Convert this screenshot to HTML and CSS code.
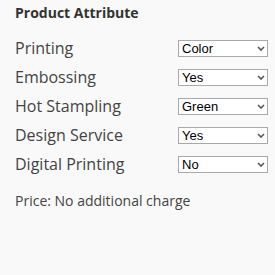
FILE: index.html
```html
<!DOCTYPE html>
<html lang="en">

<head>
	<meta charset="UTF-8">
	<meta name="viewport" content="width=device-width, initial-scale=1.0">
	<title>Product Attribute</title>
	<link rel="stylesheet" href="styles.css">
</head>

<body>
	<div class="attr-box">
		<h3 class="attr-title">Product Attribute</h3>

		<div class="attr-row">
			<label class="attr-label">Printing</label>
			<span class="attr-select">
				<select>
					<option>Color</option>
					<option>Black</option>
				</select>
				<svg class="attr-arrow" width="8" height="5" viewBox="0 0 8 5"><path d="M1 1 L4 4 L7 1" fill="none" stroke="#555" stroke-width="1.6" /></svg>
			</span>
		</div>

		<div class="attr-row">
			<label class="attr-label">Embossing</label>
			<span class="attr-select">
				<select>
					<option>Yes</option>
					<option>No</option>
				</select>
				<svg class="attr-arrow" width="8" height="5" viewBox="0 0 8 5"><path d="M1 1 L4 4 L7 1" fill="none" stroke="#555" stroke-width="1.6" /></svg>
			</span>
		</div>

		<div class="attr-row">
			<label class="attr-label">Hot Stampling</label>
			<span class="attr-select">
				<select>
					<option>Green</option>
					<option>Gold</option>
				</select>
				<svg class="attr-arrow" width="8" height="5" viewBox="0 0 8 5"><path d="M1 1 L4 4 L7 1" fill="none" stroke="#555" stroke-width="1.6" /></svg>
			</span>
		</div>

		<div class="attr-row">
			<label class="attr-label">Design Service</label>
			<span class="attr-select">
				<select>
					<option>Yes</option>
					<option>No</option>
				</select>
				<svg class="attr-arrow" width="8" height="5" viewBox="0 0 8 5"><path d="M1 1 L4 4 L7 1" fill="none" stroke="#555" stroke-width="1.6" /></svg>
			</span>
		</div>

		<div class="attr-row">
			<label class="attr-label">Digital Printing</label>
			<span class="attr-select">
				<select>
					<option>No</option>
					<option>Yes</option>
				</select>
				<svg class="attr-arrow" width="8" height="5" viewBox="0 0 8 5"><path d="M1 1 L4 4 L7 1" fill="none" stroke="#555" stroke-width="1.6" /></svg>
			</span>
		</div>

		<p class="attr-price">Price: No additional charge</p>
	</div>
</body>

</html>
```

FILE: styles.css
```css
* {
	margin: 0;
	padding: 0;
	box-sizing: border-box;
}

body {
	background: #f9f9f9;
	font-family: 'Open Sans', 'Liberation Sans', Arial, sans-serif;
	color: #444;
}

.attr-box {
	padding: 3px 7px 0 15px;
}

.attr-title {
	font-size: 14px;
	line-height: 20px;
	font-weight: 700;
	color: #333;
	margin-bottom: 11px;
}

.attr-row {
	display: flex;
	align-items: center;
	justify-content: space-between;
	height: 29px;
}

.attr-label {
	font-size: 16px;
	line-height: 29px;
	color: #444;
}

.attr-select {
	position: relative;
	display: block;
}

.attr-select select {
	display: block;
	width: 90px;
	height: 17px;
	padding: 0 0 0 3px;
	border: solid 1px #a9a9a9;
	border-radius: 0;
	background: #fff;
	font-family: 'Liberation Sans', Arial, sans-serif;
	font-size: 13px;
	line-height: 15px;
	color: #000;
	appearance: none;
	-webkit-appearance: none;
	outline: 0;
}

.attr-arrow {
	position: absolute;
	right: 3px;
	top: 6px;
	pointer-events: none;
}

.attr-price {
	font-size: 14px;
	line-height: 20px;
	margin-top: 12px;
	color: #444;
}
```
